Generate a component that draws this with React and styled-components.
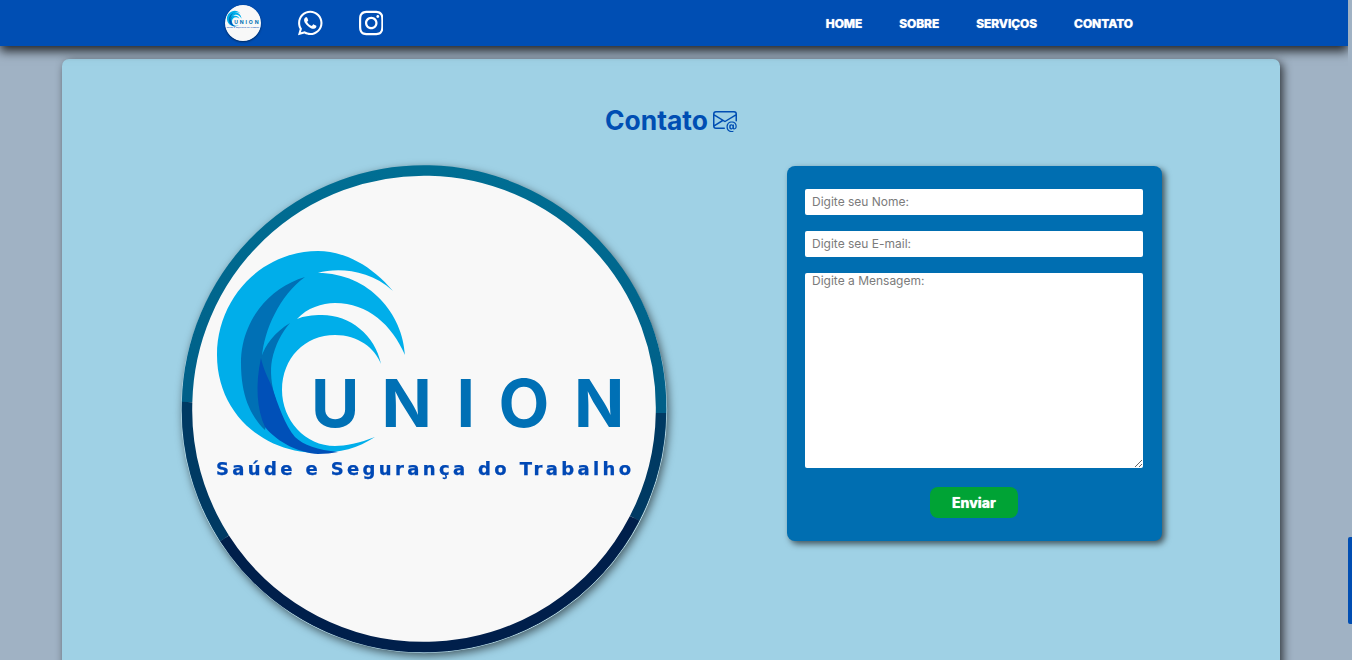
import React from "react";
import styled, { createGlobalStyle } from "styled-components";
import { BsEnvelopeAt } from "react-icons/bs";
import { FaWhatsapp, FaInstagram } from "react-icons/fa";

const GlobalStyle = createGlobalStyle`
  html, body {
    margin: 0;
    height: 100%;
    overflow: hidden;
    background: #a0b2c4;
    font-family: Inter, "Liberation Sans", sans-serif;
  }
  * { box-sizing: border-box; }
`;

function LogoArt({ ring, className }) {
  const box = ring ? "178 164 492 492" : "192 178 464 464";
  const gradId = ring ? "ringTop" : "ringTopSmall";
  return (
    <svg className={className} viewBox={box} xmlns="http://www.w3.org/2000/svg">
      <defs>
        <linearGradient id={gradId} gradientUnits="userSpaceOnUse" x1="0" y1="170" x2="0" y2="410">
          <stop offset="0" stopColor="#006e93" />
          <stop offset="1" stopColor="#005f88" />
        </linearGradient>
      </defs>
      <circle cx="424" cy="410" r="236" fill="#f8f8f8" />
      {ring && (
        <g fill="none" strokeWidth="10.5">
          <circle cx="424" cy="410" r="242.7" stroke="#b5dbe9" strokeWidth="1" />
          <path stroke={`url(#${gradId})`} d="M187.1,402 A237,237 0 0 1 661,413" />
          <path stroke="#003a63" d="M661,413 A237,237 0 0 1 634.6,518.4" />
          <path stroke="#001f4b" d="M634.6,518.4 A237,237 0 0 1 224.5,538.3" />
          <path stroke="#003a63" d="M224.5,538.3 A237,237 0 0 1 187.1,402" />
        </g>
      )}
      <path
        fill="#00aeea"
        d="M393,291 C372,266 345,251 318,251 C262,251 217,298 217,355 C217,412 262,453 318,453 C340,453 358,448 375,437 C360,443 345,446 335,446 C305,446 282,420 282,390 C282,358 305,335 335,335 C358,335 375,348 381,364 C375,335 350,315 322,315 C312,315 304,316 297,319 C307,308 322,303 335,303 C368,303 392,325 405,355 C403,315 370,273 318,273 C335,268 368,268 393,291 Z"
      />
      <path
        fill="#0070b5"
        d="M305,277 C268,288 241,322 241,363 C241,395 250,415 265,430 L270,400 L262,357 C264,330 280,295 305,277 Z"
      />
      <path
        fill="#0070b5"
        d="M290,323 C275,332 265,345 261,358 C258,375 260,395 272,400 L276,400 C271,385 270,370 272,360 C275,345 282,332 290,323 Z"
      />
      <path
        fill="#0050b8"
        d="M261,358 C255,385 257,410 265,427 C278,443 300,453 318,454 C325,454 332,453 338,452 C318,450 303,445 295,437 C285,425 278,405 272,387 C268,378 263,368 261,358 Z"
      />
      <text
        x="311 381.5 456.5 498.4 574"
        y="427"
        fill="#0070b5"
        fontFamily="Inter, sans-serif"
        fontWeight="700"
        fontSize="66"
      >
        UNION
      </text>
      <text
        x="216"
        y="475"
        fill="#0048b5"
        stroke="#0048b5"
        strokeWidth="0.25"
        fontFamily="'DejaVu Sans', sans-serif"
        fontWeight="700"
        fontSize="18"
        textLength="415"
      >
        Saúde e Segurança do Trabalho
      </text>
    </svg>
  );
}

function App() {
  return (
    <>
      <GlobalStyle />
      <Page>
        <Navbar>
          <Socials>
            <NavLogo />
            <SocialLink href="#"><FaWhatsapp /></SocialLink>
            <SocialLink href="#"><FaInstagram /></SocialLink>
          </Socials>
          <Menu>
            <MenuLink href="#">HOME</MenuLink>
            <MenuLink href="#">SOBRE</MenuLink>
            <MenuLink href="#">SERVIÇOS</MenuLink>
            <MenuLink href="#">CONTATO</MenuLink>
          </Menu>
        </Navbar>
        <Card>
          <Title>
            Contato <BsEnvelopeAt size={24} />
          </Title>
          <Columns>
            <LogoRound ring />
            <Form>
              <Field type="text" placeholder="Digite seu Nome:" />
              <Field type="email" placeholder="Digite seu E-mail:" />
              <Message placeholder="Digite a Mensagem:" />
              <Send type="button">Enviar</Send>
            </Form>
          </Columns>
        </Card>
      </Page>
      <ScrollThumb />
    </>
  );
}

const Page = styled.div`
  width: 1348px;
  height: 660px;
  overflow: hidden;
`;

const Navbar = styled.nav`
  height: 46px;
  background: #004eb3;
  box-shadow: 0 5px 10px rgba(0, 0, 0, 0.8);
  display: flex;
  align-items: center;
  justify-content: space-between;
  padding: 0 215px 0 225px;
  position: relative;
`;

const Socials = styled.div`
  display: flex;
  align-items: center;
  gap: 36px;
`;

const NavLogo = styled(LogoArt)`
  width: 36px;
  height: 36px;
  margin-right: 1px;
  border-radius: 50%;
  box-shadow: 0 1px 2px rgba(0, 0, 0, 0.5);
`;

const SocialLink = styled.a`
  color: #fff;
  display: flex;
  svg {
    width: 24.5px;
    height: 28px;
  }
`;

const Menu = styled.div`
  display: flex;
  gap: 37px;
`;

const MenuLink = styled.a`
  color: #fff;
  font-family: Inter, sans-serif;
  font-size: 12px;
  font-weight: 800;
  letter-spacing: -0.1px;
  text-decoration: none;
  text-shadow: 0 0 1px rgba(255, 255, 255, 0.7);
`;

const Card = styled.section`
  width: 1218px;
  height: 640px;
  margin: 13px 0 0 62px;
  background: #9fd1e5;
  border-radius: 7px;
  box-shadow: 3px 3px 10px rgba(0, 0, 0, 0.7);
  padding-top: 41px;
`;

const Title = styled.h2`
  margin: 0;
  height: 40px;
  display: flex;
  align-items: center;
  justify-content: center;
  gap: 5px;
  color: #004eb3;
  font-size: 26.4px;
  font-weight: 650;
`;

const Columns = styled.div`
  display: flex;
  align-items: flex-start;
  padding: 23px 0 0 116px;
  margin-top: 3px;
`;

const LogoRound = styled(LogoArt)`
  width: 492px;
  height: 492px;
  flex-shrink: 0;
  margin-top: -2px;
  filter: drop-shadow(2px 3px 4px rgba(0, 0, 0, 0.55));
`;

const Form = styled.form`
  width: 375px;
  height: 375px;
  margin-left: 117px;
  padding: 23px 19px 0 18px;
  background: #006eb1;
  border-radius: 8px;
  box-shadow: 3px 3px 6px rgba(0, 0, 0, 0.6);
  display: flex;
  flex-direction: column;
  gap: 16px;
`;

const Field = styled.input`
  width: 100%;
  height: 26px;
  border: none;
  border-radius: 2px;
  background: #fff;
  padding: 0 7px 2px;
  font-family: Inter, sans-serif;
  font-size: 12px;
  &::placeholder {
    color: #7b7b7b;
  }
`;

const Message = styled.textarea`
  width: 100%;
  height: 195px;
  border: none;
  border-radius: 2px;
  background: #fff;
  padding: 0 7px;
  font-family: Inter, sans-serif;
  font-size: 12px;
  &::placeholder {
    color: #7b7b7b;
  }
`;

const Send = styled.button`
  align-self: center;
  width: 88px;
  height: 31px;
  margin-top: 3px;
  border: none;
  border-radius: 8px;
  background: #00a335;
  color: #fff;
  font-family: Inter, sans-serif;
  font-size: 14px;
  font-weight: 800;
  text-shadow: 0 0 1px rgba(255, 255, 255, 0.7);
`;

const ScrollThumb = styled.div`
  position: fixed;
  right: 0;
  top: 537px;
  width: 4px;
  height: 87px;
  background: #004eb3;
  border-radius: 2px 0 0 2px;
`;

export default App;
